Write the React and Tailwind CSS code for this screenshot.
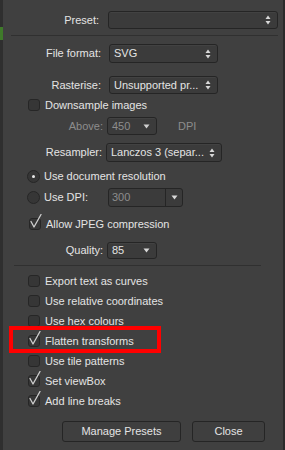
import React from 'react';

const textCls = "text-[#e4e4e4]";

function UpDown() {
  return (
    <svg width="6" height="10" viewBox="0 0 6 10" className="shrink-0">
      <path d="M3 0.5 L5.5 4 H0.5 Z" fill="#d8d8d8" />
      <path d="M3 9.5 L5.5 6 H0.5 Z" fill="#d8d8d8" />
    </svg>
  );
}

function Down({ color = "#d8d8d8" }) {
  return (
    <svg width="7" height="5" viewBox="0 0 7 5" className="shrink-0">
      <path d="M0.5 0.5 H6.5 L3.5 4.5 Z" fill={color} />
    </svg>
  );
}

function Select({ value, width, dim, single }) {
  return (
    <div
      className="h-full flex items-center justify-between pl-[4px] pr-[6px] rounded-[3px] border border-[#252525] bg-[#3b3b3b] shadow-[inset_0_1px_0_rgba(255,255,255,0.04)]"
      style={{ width }}
    >
      <span className={dim ? "text-[#8d8d8d]" : textCls}>{value}</span>
      {single ? <Down color={dim ? "#cfcfcf" : "#d8d8d8"} /> : <UpDown />}
    </div>
  );
}

function Check({ checked }) {
  return (
    <div className="relative w-[12px] h-[12px] shrink-0">
      <div className="w-[12px] h-[12px] rounded-[3px] border border-[#262626] bg-[#363636]" />
      {checked && (
        <svg width="14" height="16" viewBox="0 0 14 16" className="absolute left-[0px] top-[-4px]">
          <path d="M2 7.5 L5 13 L12 0.5" stroke="#cfcfcf" strokeWidth="1.3" fill="none" strokeLinecap="round" strokeLinejoin="round" />
        </svg>
      )}
    </div>
  );
}

function Radio({ on }) {
  return (
    <div className="w-[13px] h-[13px] rounded-full border border-[#262626] bg-[#363636] flex items-center justify-center shrink-0">
      {on && <div className="w-[3px] h-[3px] rounded-full bg-[#e8e8e8]" />}
    </div>
  );
}

function LabelRow({ label, labelW = 101, gap = 7, h, mt, dim, children }) {
  return (
    <div className="flex items-center" style={{ height: h, marginTop: mt }}>
      <div className={`text-right ${dim ? "text-[#8d8d8d]" : textCls}`} style={{ width: labelW }}>
        {label}
      </div>
      <div className="h-full flex items-center" style={{ marginLeft: gap }}>
        {children}
      </div>
    </div>
  );
}

function CheckRow({ label, checked }) {
  return (
    <div className="h-[20px] flex items-center pl-[28px] gap-[5px]">
      <Check checked={checked} />
      <span className={textCls}>{label}</span>
    </div>
  );
}

export default function App() {
  return (
    <div className="w-[285px] h-[450px] bg-[#404040] relative overflow-hidden text-[11px] leading-none" style={{ fontFamily: '"Liberation Sans", Arial, sans-serif' }}>
      {/* window edges */}
      <div className="absolute left-0 top-0 w-[3px] h-full bg-[#2f2f2f]" />
      <div className="absolute left-0 top-[27px] w-[3px] h-[13px] bg-[#3f7a2a]" />
      <div className="absolute right-0 top-0 w-[2px] h-full bg-[#2b2b2b]" />

      <div className="flex flex-col pt-[11px]">
        <LabelRow label="Preset:" labelW={99} gap={9} h={18}>
          <Select value="" width={170} />
        </LabelRow>

        <div className="mt-[6px] ml-[11px] w-[267px] h-[1px] bg-[#303030]" />

        <LabelRow label="File format:" h={19} mt={8} gap={8}>
          <Select value="SVG" width={109} />
        </LabelRow>
        <LabelRow label="Rasterise:" h={18} mt={13} gap={8}>
          <Select value="Unsupported pr..." width={109} />
        </LabelRow>

        <div className="h-[16px] mt-[3px] flex items-center pl-[28px] gap-[5px]">
          <Check />
          <span className={textCls}>Downsample images</span>
        </div>

        <LabelRow label="Above:" labelW={103} gap={4} h={18} mt={4} dim>
          <Select value="450" width={50} dim single />
          <span className="ml-[21px] text-[#8d8d8d]">DPI</span>
        </LabelRow>

        <LabelRow label="Resampler:" labelW={102} gap={4} h={19} mt={8}>
          <Select value="Lanczos 3 (separ..." width={116} />
        </LabelRow>

        <div className="h-[16px] mt-[6px] flex items-center pl-[27px] gap-[4px]">
          <Radio on />
          <span className={textCls}>Use document resolution</span>
        </div>

        <div className="h-[19px] mt-[4px] flex items-center pl-[27px]">
          <Radio />
          <span className={`ml-[4px] w-[64px] ${textCls}`}>Use DPI:</span>
          <div className="h-full w-[75px] flex rounded-[3px] border border-[#252525] bg-[#3b3b3b]">
            <div className="flex-1 flex items-center pl-[3px] text-[#8d8d8d]">300</div>
            <div className="w-[17px] border-l border-[#252525] flex items-center justify-center">
              <Down />
            </div>
          </div>
        </div>

        <div className="h-[16px] mt-[9px] flex items-center pl-[29px] gap-[5px]">
          <Check checked />
          <span className={textCls}>Allow JPEG compression</span>
        </div>

        <LabelRow label="Quality:" labelW={103} gap={4} h={17} mt={10}>
          <Select value="85" width={50} single />
        </LabelRow>

        <div className="mt-[6px] ml-[14px] w-[247px] h-[1px] bg-[#303030]" />

        <div className="flex flex-col mt-[5px]">
          <CheckRow label="Export text as curves" />
          <CheckRow label="Use relative coordinates" />
          <CheckRow label="Use hex colours" />
          <div className="relative">
            <CheckRow label="Flatten transforms" checked />
            <div className="absolute left-[9px] top-[-5px] w-[152px] h-[27px] border-[4px] border-[#ff0000]" />
          </div>
          <CheckRow label="Use tile patterns" />
          <CheckRow label="Set viewBox" checked />
          <CheckRow label="Add line breaks" checked />
        </div>

        <div className="mt-[10px] flex pl-[62px] gap-[11px]">
          <button className={`w-[119px] h-[21px] rounded-[3px] border border-[#252525] bg-[#3f3f3f] ${textCls}`}>Manage Presets</button>
          <button className={`w-[73px] h-[21px] rounded-[3px] border border-[#252525] bg-[#3f3f3f] ${textCls}`}>Close</button>
        </div>
      </div>
    </div>
  );
}
